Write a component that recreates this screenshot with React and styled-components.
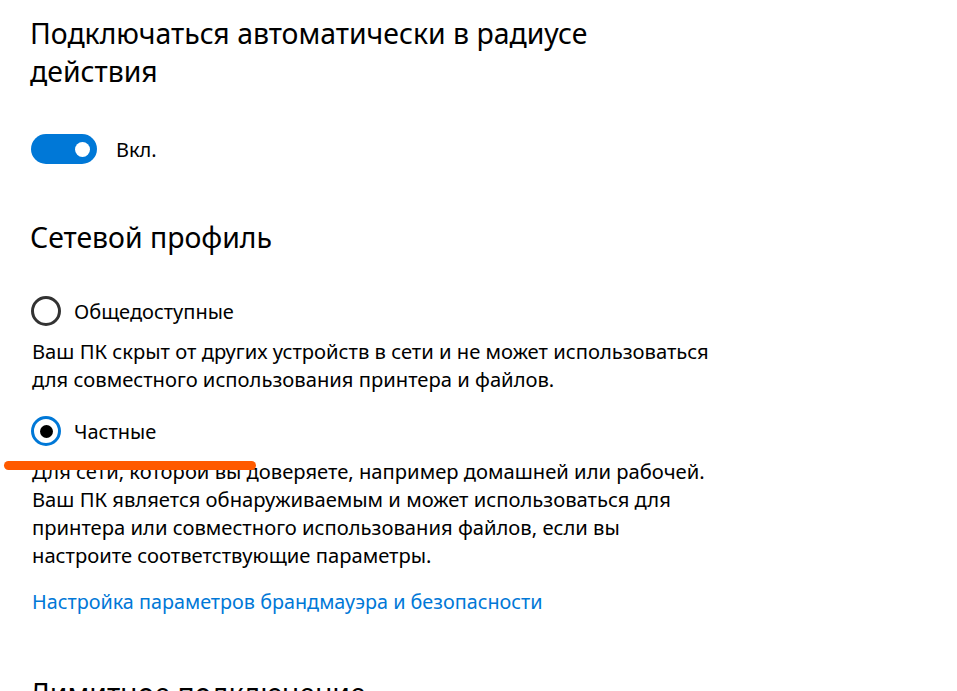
import React from 'react'
import styled, { createGlobalStyle } from 'styled-components'

const GlobalStyle = createGlobalStyle`
  html, body {
    margin: 0;
    padding: 0;
    background: #ffffff;
  }
  body {
    font-family: 'Noto Sans', 'Open Sans', sans-serif;
    color: #000000;
    overflow: hidden;
  }
`

const Page = styled.div`
  position: relative;
  width: 957px;
  height: 691px;
  overflow: hidden;
  padding-left: 30px;
  box-sizing: border-box;
`

const Heading = styled.h2`
  margin: ${p => p.$top}px 0 0 0;
  font-size: 28.4px;
  line-height: 38px;
  font-weight: 400;
  white-space: nowrap;
`

const ToggleRow = styled.label`
  display: flex;
  align-items: center;
  gap: 19px;
  margin-top: 44px;
  padding-left: 1px;
  font-size: 20px;
`

const Track = styled.span`
  display: flex;
  align-items: center;
  justify-content: ${p => (p.$on ? 'flex-end' : 'flex-start')};
  width: 66px;
  height: 30px;
  padding: 0 7px;
  box-sizing: border-box;
  border-radius: 15px;
  background: ${p => (p.$on ? '#0078d7' : '#ffffff')};
`

const Knob = styled.span`
  width: 15px;
  height: 15px;
  border-radius: 50%;
  background: #ffffff;
`

const RadioRow = styled.label`
  display: flex;
  align-items: center;
  gap: 13px;
  margin-top: ${p => p.$top}px;
  padding-left: 1px;
  font-size: 20px;
`

const RadioCircle = styled.span`
  display: flex;
  align-items: center;
  justify-content: center;
  width: 30px;
  height: 30px;
  box-sizing: border-box;
  border-radius: 50%;
  border: 3px solid ${p => (p.$checked ? '#0078d7' : '#333333')};
`

const Dot = styled.span`
  width: 13px;
  height: 13px;
  border-radius: 50%;
  background: #000000;
`

const Description = styled.p`
  margin: 11px 0 0 2px;
  font-size: 20.2px;
  line-height: 28px;
  white-space: nowrap;
`

const Link = styled.a`
  display: block;
  margin: 19px 0 0 2px;
  font-size: 19.8px;
  line-height: 28px;
  color: #0078d7;
  text-decoration: none;
`

// annotation stroke drawn over the screenshot
const Marker = styled.span`
  position: absolute;
  left: 4px;
  top: 461px;
  width: 252px;
  height: 9px;
  border-radius: 5px;
  background: #ff5a00;
`

const App = () => {
  return (
    <>
      <GlobalStyle />
      <Page>
        <Heading $top={14}>
          Подключаться автоматически в радиусе
          <br />
          действия
        </Heading>

        <ToggleRow>
          <Track $on>
            <Knob />
          </Track>
          Вкл.
        </ToggleRow>

        <Heading $top={54}>Сетевой профиль</Heading>

        <RadioRow $top={40}>
          <RadioCircle />
          Общедоступные
        </RadioRow>
        <Description>
          Ваш ПК скрыт от других устройств в сети и не может использоваться
          <br />
          для совместного использования принтера и файлов.
        </Description>

        <RadioRow $top={23}>
          <RadioCircle $checked>
            <Dot />
          </RadioCircle>
          Частные
        </RadioRow>
        <Description>
          Для сети, которой вы доверяете, например домашней или рабочей.
          <br />
          Ваш ПК является обнаруживаемым и может использоваться для
          <br />
          принтера или совместного использования файлов, если вы
          <br />
          настроите соответствующие параметры.
        </Description>

        <Link href="#">Настройка параметров брандмауэра и безопасности</Link>

        <Heading $top={58}>Лимитное подключение</Heading>

        <Marker />
      </Page>
    </>
  )
}

export default App
